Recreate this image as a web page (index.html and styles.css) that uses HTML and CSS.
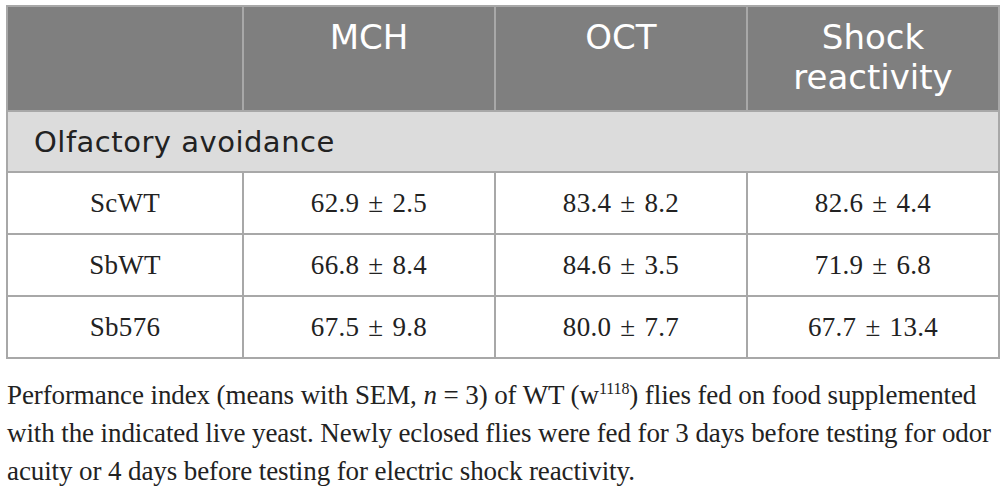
FILE: index.html
```html
<!DOCTYPE html>
<html lang="en">
<head>
  <meta charset="UTF-8">
  <meta name="viewport" content="width=device-width, initial-scale=1.0">
  <title>Table 1</title>
  <link rel="stylesheet" href="styles.css">
</head>
<body>
  <div class="wrap">
    <table class="results">
      <colgroup>
        <col class="c-strain">
        <col class="c-val">
        <col class="c-val">
        <col class="c-val">
      </colgroup>
      <thead>
        <tr>
          <th></th>
          <th>MCH</th>
          <th>OCT</th>
          <th>Shock reactivity</th>
        </tr>
      </thead>
      <tbody>
        <tr class="section">
          <td colspan="4">Olfactory avoidance</td>
        </tr>
        <tr>
          <td>ScWT</td>
          <td>62.9 ± 2.5</td>
          <td>83.4 ± 8.2</td>
          <td>82.6 ± 4.4</td>
        </tr>
        <tr>
          <td>SbWT</td>
          <td>66.8 ± 8.4</td>
          <td>84.6 ± 3.5</td>
          <td>71.9 ± 6.8</td>
        </tr>
        <tr>
          <td>Sb576</td>
          <td>67.5 ± 9.8</td>
          <td>80.0 ± 7.7</td>
          <td>67.7 ± 13.4</td>
        </tr>
      </tbody>
    </table>
    <p class="caption">Performance index (means with SEM, <i>n</i> = 3) of WT (w<sup>1118</sup>) flies fed on food supplemented with the indicated live yeast. Newly eclosed flies were fed for 3 days before testing for odor acuity or 4 days before testing for electric shock reactivity.</p>
  </div>
</body>
</html>
```

FILE: styles.css
```css
body {
  margin: 0;
  background: #fff;
  color: #222;
}
.wrap {
  padding: 5px 0 0 6px;
  width: 994px;
}
.results {
  width: 992px;
  border-collapse: collapse;
  border: 2px solid #a8a8a8;
  table-layout: fixed;
}
.c-strain { width: 236px; }
.c-val { width: 252px; }
.results th {
  background: #7f7f7f;
  color: #fff;
  font-family: "DejaVu Sans", sans-serif;
  font-weight: 400;
  font-size: 34px;
  line-height: 40px;
  height: 105px;
  padding: 10px 10px 0;
  vertical-align: top;
  border: 2px solid #a8a8a8;
  box-sizing: border-box;
}
.results td {
  font-family: "Liberation Serif", serif;
  font-size: 27px;
  letter-spacing: 0.3px;
  word-spacing: 2px;
  text-align: center;
  height: 60px;
  padding: 0;
  border: 2px solid #a8a8a8;
}
.results .section td {
  height: 59px;
  background: #dcdcdc;
  font-family: "DejaVu Sans", sans-serif;
  font-size: 29px;
  letter-spacing: 0.5px;
  word-spacing: 0;
  text-align: left;
  padding-left: 26px;
}
.caption {
  margin: 17px 0 0 1px;
  font-family: "Liberation Serif", serif;
  font-size: 27px;
  line-height: 38px;
  letter-spacing: -0.1px;
}
.caption sup {
  font-size: 16px;
  line-height: 0;
}
```
